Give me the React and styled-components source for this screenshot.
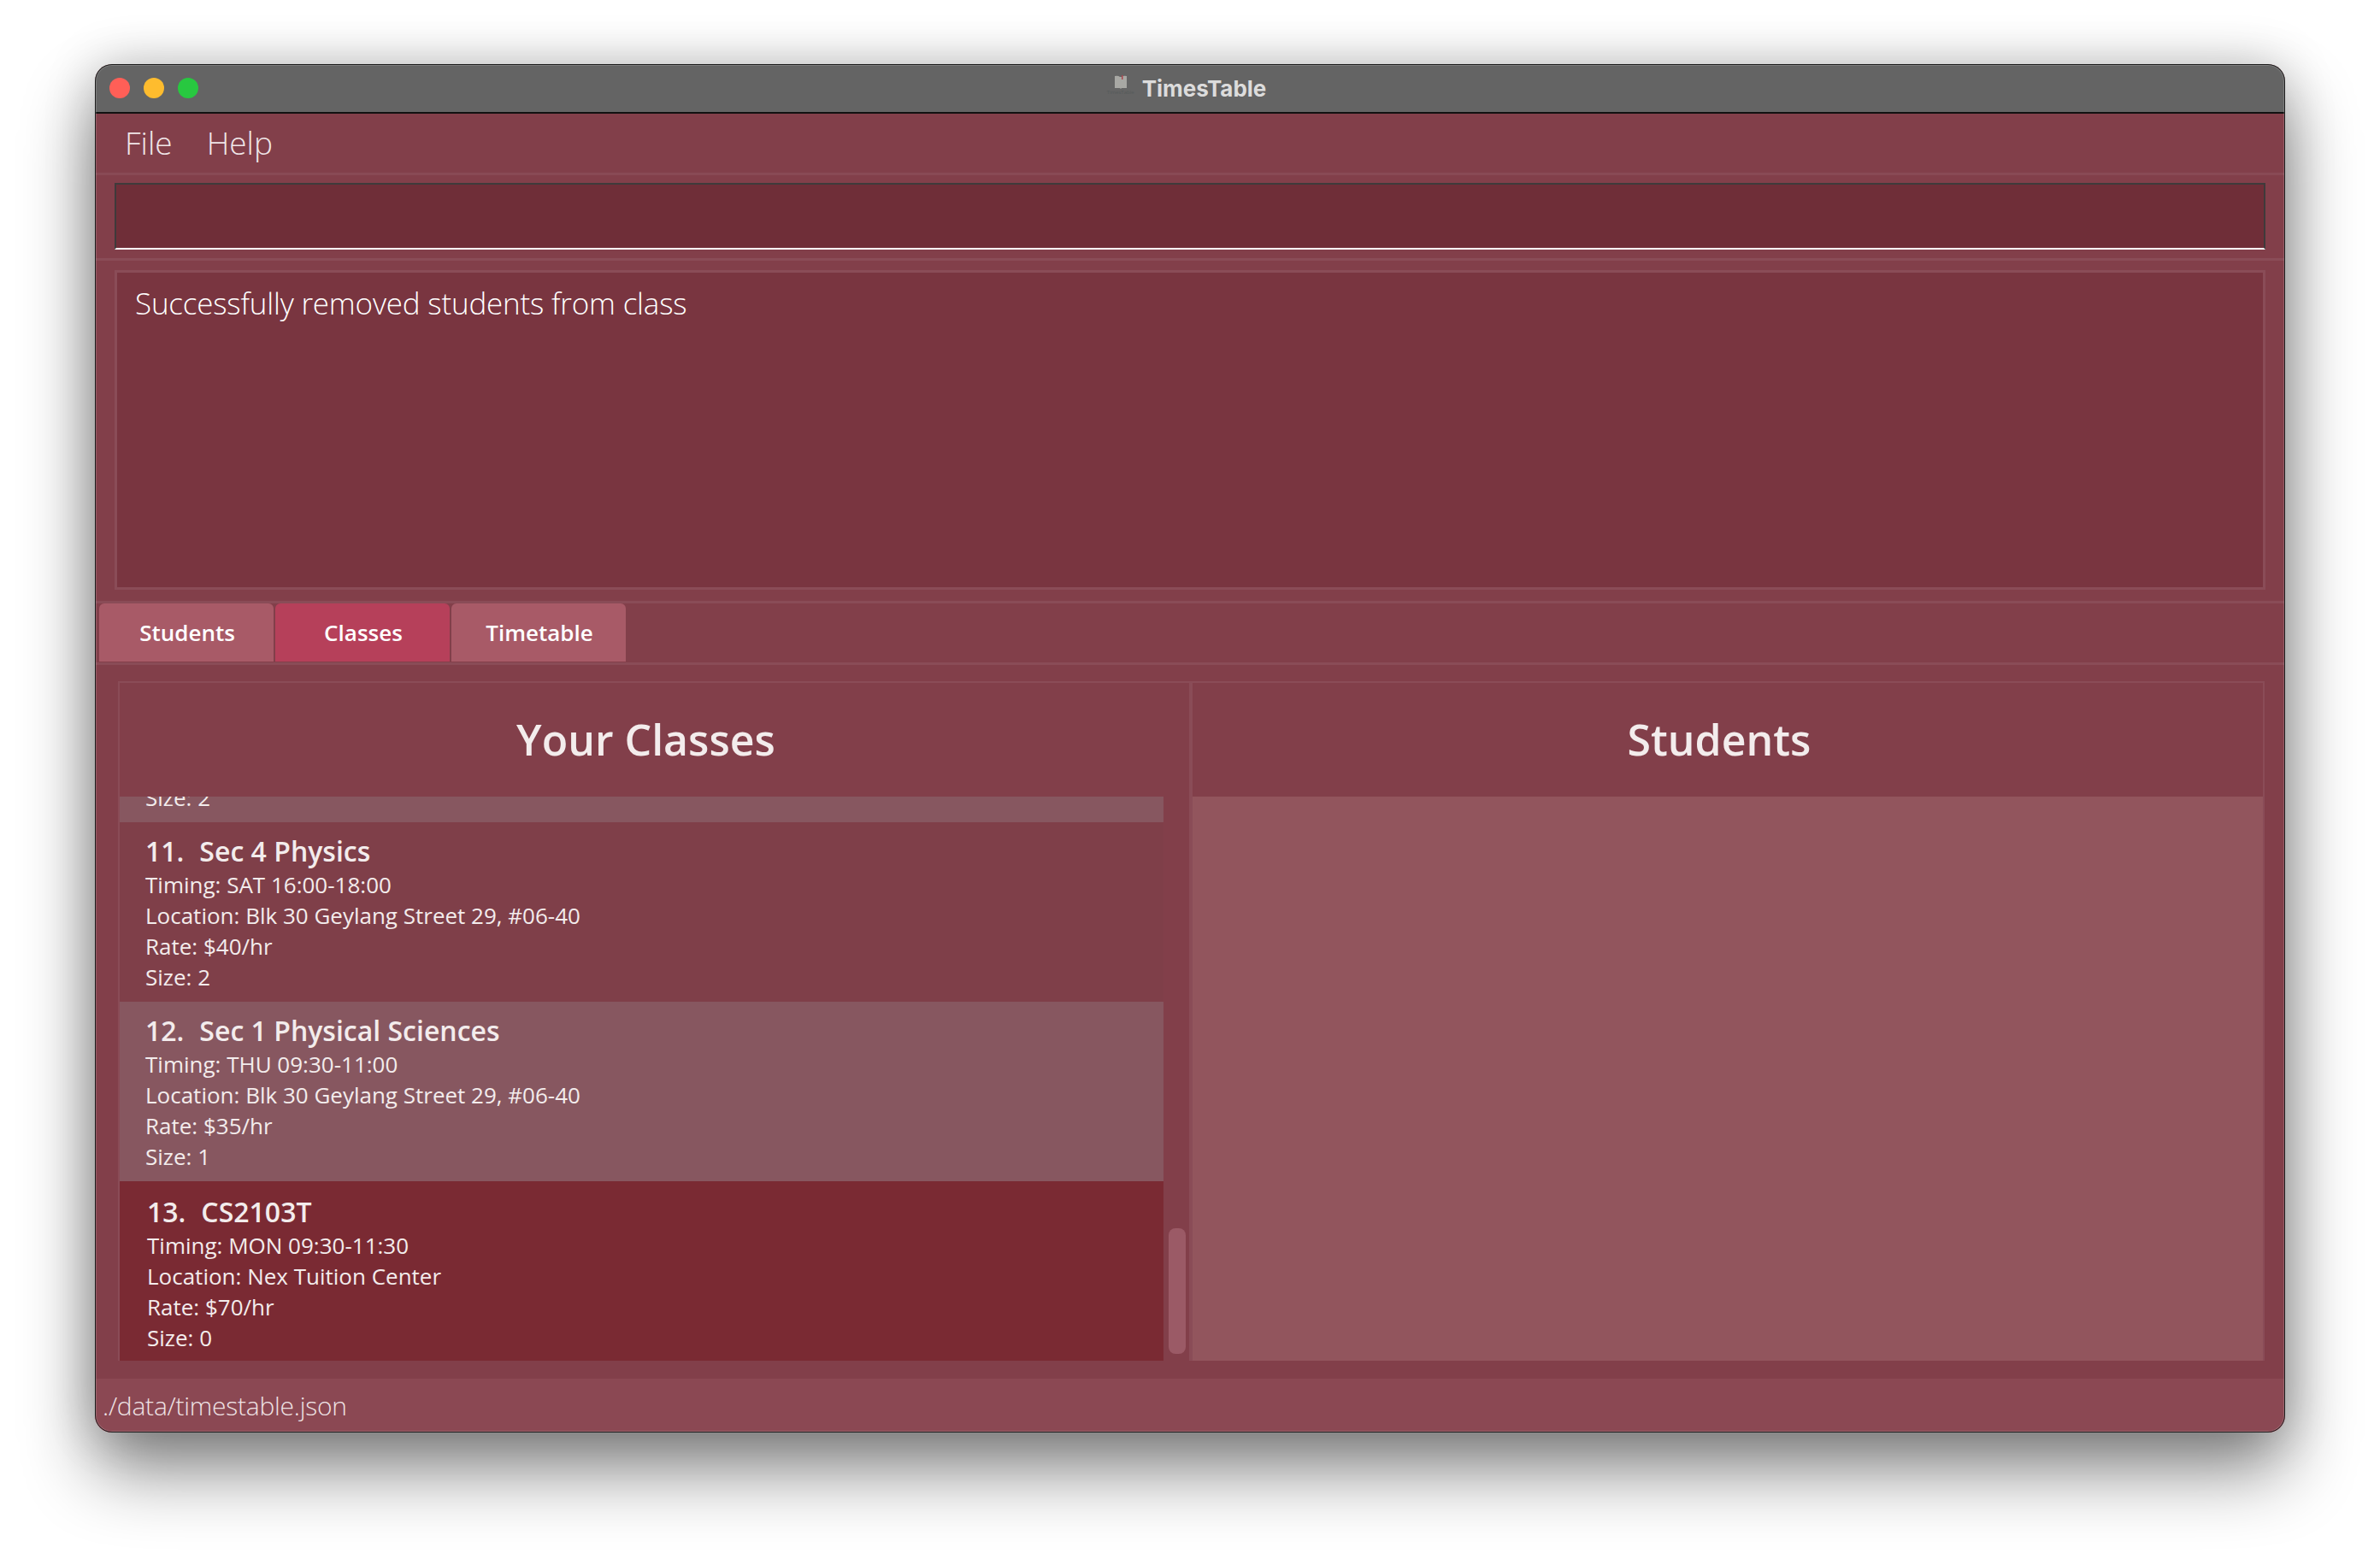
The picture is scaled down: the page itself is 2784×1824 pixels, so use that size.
import React from "react";
import styled, { createGlobalStyle } from "styled-components";

const GlobalStyle = createGlobalStyle`
  html, body {
    margin: 0;
    background: #ffffff;
  }
  * {
    box-sizing: border-box;
  }
`;

const classes = [
  { id: 10, name: "Sec 3 Physics", timing: "FRI 14:00-16:00", location: "Blk 30 Geylang Street 29, #06-40", rate: "$40/hr", size: 2 },
  { id: 11, name: "Sec 4 Physics", timing: "SAT 16:00-18:00", location: "Blk 30 Geylang Street 29, #06-40", rate: "$40/hr", size: 2 },
  { id: 12, name: "Sec 1 Physical Sciences", timing: "THU 09:30-11:00", location: "Blk 30 Geylang Street 29, #06-40", rate: "$35/hr", size: 1 },
  { id: 13, name: "CS2103T", timing: "MON 09:30-11:30", location: "Nex Tuition Center", rate: "$70/hr", size: 0, selected: true },
];

const Page = styled.div`
  width: 2784px;
  height: 1824px;
  padding: 75px 111px 148px;
  font-family: "Open Sans", "Noto Sans", sans-serif;
  overflow: hidden;
`;

const Shadow = styled.div`
  height: 100%;
  border-radius: 20px;
  box-shadow: 0 44px 84px rgba(0, 0, 0, 0.48), 0 0 60px rgba(0, 0, 0, 0.2);
`;

const Window = styled.div`
  position: relative;
  height: 100%;
  display: flex;
  flex-direction: column;
  border-radius: 20px;
  overflow: hidden;
  background: #823f4a;

  /* hairline edge of the window, over its contents */
  &::after {
    content: "";
    position: absolute;
    inset: 0;
    border-radius: 20px;
    border: 1px solid #1c1c1c;
    box-shadow: inset 0 0 0 1px rgba(255, 255, 255, 0.16);
    pointer-events: none;
  }
`;

const TitleBar = styled.div`
  flex: none;
  height: 58px;
  display: grid;
  grid-template-columns: 1fr auto 1fr;
  align-items: center;
  padding: 0 17px;
  background: #646464;
  border-bottom: 2px solid #111111;
`;

const Lights = styled.div`
  display: flex;
  gap: 16px;
`;

const Light = styled.span`
  width: 24px;
  height: 24px;
  border-radius: 50%;
  background: ${(p) => p.color};
`;

const AppName = styled.div`
  display: flex;
  align-items: center;
  gap: 10px;
  padding-right: 7px;
`;

const AppIcon = styled.div`
  width: 30px;
  height: 36px;
  display: flex;
  flex-direction: column;
  align-items: center;
  margin-top: 6px;
`;

const AppIconLabel = styled.span`
  font-size: 6px;
  line-height: 8px;
  color: #555a5a;
  white-space: nowrap;
`;

const AppTitle = styled.span`
  font-family: Inter, sans-serif;
  font-size: 26px;
  font-weight: 700;
  color: #dcdcdc;
`;

const MenuBar = styled.div`
  flex: none;
  height: 72px;
  display: flex;
  align-items: center;
  gap: 40px;
  padding: 0 35px 2px;
  border-bottom: 3px solid #894a55;
`;

const MenuItem = styled.span`
  font-size: 37px;
  font-weight: 300;
  color: #f0e6e8;
`;

const CommandSection = styled.div`
  flex: none;
  height: 100px;
  padding: 9px 23px 10px;
  border-bottom: 3px solid #8a4c57;
`;

const CommandBox = styled.div`
  height: 78px;
  background: #6f2e38;
  border: 2px solid #3f3a3b;
  border-bottom: 2px solid #ffffff;
`;

const ResultSection = styled.div`
  flex: none;
  height: 401px;
  padding: 11px 23px 13px;
  border-bottom: 3px solid #8a4c57;
`;

const ResultBox = styled.div`
  height: 100%;
  padding: 12px 21px;
  background: #793540;
  border: 3px solid #8a4c57;
  font-size: 35px;
  font-weight: 300;
  letter-spacing: -0.2px;
  line-height: 48px;
  color: #ffffff;
`;

const TabBar = styled.div`
  flex: none;
  height: 72px;
  display: flex;
  align-items: flex-start;
  gap: 2px;
  padding: 0 5px;
  border-bottom: 3px solid #8a4c57;
`;

const Tab = styled.div`
  width: 204px;
  height: 68px;
  display: flex;
  align-items: center;
  justify-content: center;
  padding-left: 2px;
  border-radius: 6px 6px 0 0;
  background: ${(p) => (p.$active ? "#b6405a" : "#a85a67")};
  font-size: 26px;
  font-weight: 600;
  color: #ffffff;
`;

const TabPane = styled.div`
  flex: 1;
  min-height: 0;
  display: grid;
  grid-template-columns: 1253px 1fr;
  padding: 19px 24px 21px 27px;
`;

const Panel = styled.div`
  display: flex;
  flex-direction: column;
  min-height: 0;
  border-top: 2px solid #8a4c57;
  border-left: ${(p) => (p.$last ? "4px" : "2px")} solid #8a4c57;
  border-right: ${(p) => (p.$last ? "2px solid #8a4c57" : "none")};
`;

const PanelHeader = styled.div`
  flex: none;
  height: 133px;
  display: flex;
  align-items: center;
  justify-content: center;
  padding: 0 20px 2px 0;
  font-size: 50px;
  font-weight: 600;
  color: #f3ecec;
`;

const ListRow = styled.div`
  flex: 1;
  min-height: 0;
  display: flex;
`;

const ClassList = styled.div`
  flex: 1;
  min-width: 0;
  display: flex;
  flex-direction: column;
  justify-content: flex-end;
  overflow: hidden;
`;

const ClassCard = styled.div`
  flex: none;
  height: 210px;
  padding: ${(p) => (p.$selected ? "14px 30px 0 32px" : "12px 30px 0 30px")};
  background: ${(p) => (p.$selected ? "#7a2a33" : p.$odd ? "#7f3f49" : "#875760")};
  color: #f3ecec;
`;

const CardTitle = styled.div`
  display: flex;
  gap: 18px;
  font-size: 32px;
  font-weight: 600;
  line-height: 43px;
`;

const CardLine = styled.div`
  font-size: 26px;
  line-height: 36px;
`;

const ScrollTrack = styled.div`
  flex: none;
  width: 30px;
  padding: 0 4px 8px 6px;
  display: flex;
  align-items: flex-end;
`;

const ScrollThumb = styled.div`
  width: 20px;
  height: 147px;
  border-radius: 8px;
  background: #9b5a66;
`;

const EmptyList = styled.div`
  flex: 1;
  background: #92555d;
`;

const StatusBar = styled.div`
  flex: none;
  height: 63px;
  padding: 0 9px;
  display: flex;
  align-items: center;
  background: #8b4853;
  font-size: 30px;
  font-weight: 300;
  letter-spacing: -0.25px;
  color: #efe3e5;
`;

const BookIcon = () => (
  <svg width="14" height="16" viewBox="0 0 14 16">
    <path d="M0 1 Q4 0 6 2 H8 Q10 0 14 1 V15 H8 L7 16 L6 15 H0 Z" fill="#a8a8a4" />
    <rect x="8" y="0" width="1.5" height="5" fill="#a8484f" />
  </svg>
);

const App = () => {
  return (
    <Page>
      <GlobalStyle />
      <Shadow>
        <Window>
          <TitleBar>
            <Lights>
              <Light color="#ff5f57" />
              <Light color="#febc2e" />
              <Light color="#28c840" />
            </Lights>
            <AppName>
              <AppIcon>
                <BookIcon />
                <AppIconLabel>TimesTable</AppIconLabel>
              </AppIcon>
              <AppTitle>TimesTable</AppTitle>
            </AppName>
            <span />
          </TitleBar>
          <MenuBar>
            <MenuItem>File</MenuItem>
            <MenuItem>Help</MenuItem>
          </MenuBar>
          <CommandSection>
            <CommandBox />
          </CommandSection>
          <ResultSection>
            <ResultBox>Successfully removed students from class</ResultBox>
          </ResultSection>
          <TabBar>
            <Tab>Students</Tab>
            <Tab $active>Classes</Tab>
            <Tab>Timetable</Tab>
          </TabBar>
          <TabPane>
            <Panel>
              <PanelHeader>Your Classes</PanelHeader>
              <ListRow>
                <ClassList>
                  {classes.map((c, i) => (
                    <ClassCard key={c.id} $odd={i % 2 === 1} $selected={c.selected}>
                      <CardTitle>
                        <span>{c.id}.</span>
                        <span>{c.name}</span>
                      </CardTitle>
                      <CardLine>Timing: {c.timing}</CardLine>
                      <CardLine>Location: {c.location}</CardLine>
                      <CardLine>Rate: {c.rate}</CardLine>
                      <CardLine>Size: {c.size}</CardLine>
                    </ClassCard>
                  ))}
                </ClassList>
                <ScrollTrack>
                  <ScrollThumb />
                </ScrollTrack>
              </ListRow>
            </Panel>
            <Panel $last>
              <PanelHeader>Students</PanelHeader>
              <ListRow>
                <EmptyList />
              </ListRow>
            </Panel>
          </TabPane>
          <StatusBar>./data/timestable.json</StatusBar>
        </Window>
      </Shadow>
    </Page>
  );
};

export default App;
